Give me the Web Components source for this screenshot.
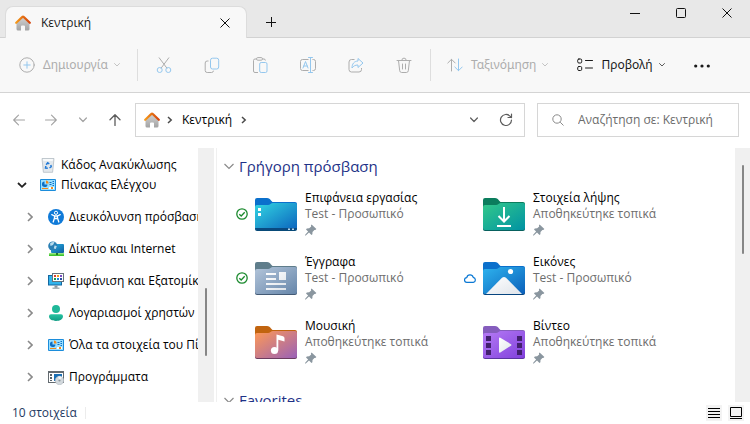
<!DOCTYPE html>
<html lang="el">
<head>
<meta charset="utf-8">
<title>Κεντρική</title>
<style>
  html, body {
    margin: 0;
    height: 100%;
    overflow: hidden;
    background: #fff;
    font-family: "Open Sans", "Noto Sans", sans-serif;
    font-size: 12px;
    line-height: 16px;
    color: #000;
  }
</style>
</head>
<body>
<explorer-window></explorer-window>

<script>
const HOUSE = `
  <defs>
    <linearGradient id="wall" x1="0" y1="0" x2="0" y2="1"><stop offset="0" stop-color="#d2d2d2"/><stop offset="1" stop-color="#a3a3a3"/></linearGradient>
    <linearGradient id="roof" x1="0" y1="0" x2="1" y2="0"><stop offset="0" stop-color="#f59a1b"/><stop offset="1" stop-color="#d4430c"/></linearGradient>
  </defs>
  <path fill="url(#wall)" d="M1.500 8 8 2l6.500 6v6a1.500 1.500 0 0 1-1.500 1.500H10V11.500a1 1 0 0 0-1-1H7a1 1 0 0 0-1 1v4H3A1.500 1.500 0 0 1 1.500 14z"/>
  <path fill="none" stroke="url(#roof)" stroke-width="2.200" stroke-linecap="round" stroke-linejoin="round" d="M1.200 7.800 7.400 1.900q.6-.6 1.200 0L14.800 7.800"/>`;

const PANEL = `
  <rect x="0" y="2" width="16" height="12" rx="1" fill="#1c8ddb"/>
  <rect x="1" y="3" width="14" height="10" fill="#9be0ff"/>
  <path fill="#0e6fc4" d="M4.500 4.500a2.800 2.800 0 1 0 3 3h-3z"/>
  <path fill="#f28a1c" d="M6 3.500A3 3 0 0 1 8.600 6.500H6z"/>
  <path fill="none" stroke="#0e6fc4" d="M9.500 5.500h2M9.500 7.500h2M12.500 4.500h1.500M12.500 6.500h1.500M12.500 8.500h1.500"/>
  <rect x="2" y="11" width="6" height="1" fill="#f28a1c"/>
  <rect x="9" y="10" width="5" height="2" fill="#fff"/>
  <rect x="11" y="10" width="2" height="2" fill="#f28a1c"/>`;

// every folder shares the same outline, only the colours and the symbol differ
function folder(tab, from, to, edge, symbol) {
  return `
  <defs>
    <linearGradient id="front" x1="0" y1="0" x2="1" y2="1"><stop offset="0" stop-color="${from}"/><stop offset="1" stop-color="${to}"/></linearGradient>
    <linearGradient id="white" x1="0" y1="0" x2="1" y2="1"><stop offset="0" stop-color="#fff"/><stop offset="1" stop-color="#dfe4ea"/></linearGradient>
  </defs>
  <path fill="${tab}" d="M0 2a2 2 0 0 1 2-2h10c2 0 3 1 4 2.500L17.500 4H40a2 2 0 0 1 2 2v8H0z"/>
  <path fill="${edge}" d="M0 10h42v21a2 2 0 0 1-2 2H2a2 2 0 0 1-2-2z"/>
  <path fill="url(#front)" d="M0 9a2 2 0 0 1 2-2h11c2 0 3-2 5-2h22a2 2 0 0 1 2 2v23a2 2 0 0 1-2 2H2a2 2 0 0 1-2-2z"/>
  ${symbol}`;
}

const ICONS = {
  house: [16, 16, HOUSE],
  panel: [16, 16, PANEL],
  close: [10, 10, `<path fill="none" stroke="currentColor" d="m.5.5 9 9m0-9-9 9"/>`],
  plus: [10, 10, `<path fill="none" stroke="currentColor" d="M5.500 0v10M0 5.500h10"/>`],
  minimize: [10, 10, `<path fill="none" stroke="currentColor" d="M0 5.500h10"/>`],
  maximize: [10, 10, `<rect x=".5" y=".5" width="9" height="9" rx="1" fill="none" stroke="currentColor"/>`],
  down: [8, 8, `<path fill="none" stroke="currentColor" stroke-linecap="round" stroke-linejoin="round" d="m1.500 2.500 2.500 2.500 2.500-2.500"/>`],
  midDown: [8, 8, `<path fill="none" stroke="currentColor" stroke-width="1.200" stroke-linecap="round" stroke-linejoin="round" d="m.6 2 3.400 3.500L7.400 2"/>`],
  wideDown: [10, 8, `<path fill="none" stroke="currentColor" stroke-width="1.200" d="m.5 2 4.500 4.500L9.500 2"/>`],
  boldDown: [10, 8, `<path fill="none" stroke="currentColor" stroke-width="1.800" d="m1 2 4 3.800L9 2"/>`],
  right: [6, 10, `<path fill="none" stroke="currentColor" stroke-width="1.600" d="m1 1 4 4-4 4"/>`],
  crumb: [6, 8, `<path fill="none" stroke="currentColor" stroke-width="1.500" d="m1 1 3.200 3L1 7"/>`],
  add: [16, 16, `<g fill="none" stroke-linecap="round"><circle cx="8" cy="8" r="7.200" stroke="currentColor"/><path stroke="var(--accent)" d="M8 4.800v6.400M4.800 8h6.400"/></g>`],
  cut: [16, 16, `<g fill="none"><path stroke="currentColor" stroke-linecap="round" d="M3.200.8 10.800 11M12.800.8 5.200 11"/><g stroke="var(--accent)"><circle cx="3.700" cy="13" r="2.500"/><circle cx="12.300" cy="13" r="2.500"/></g></g>`],
  copy: [16, 16, `<g fill="none"><path stroke="currentColor" d="M4.500 4H3.200a2 2 0 0 0-2 2v7.500a2 2 0 0 0 2 2h4.300a2 2 0 0 0 2-1.800"/><rect x="6.500" y="1.200" width="8.200" height="10.800" rx="2" stroke="var(--accent)"/></g>`],
  paste: [16, 16, `<g fill="none"><path stroke="currentColor" d="M4.500 2H3a1.500 1.500 0 0 0-1.500 1.500V14A1.500 1.500 0 0 0 3 15.500h3M10.500 2H12a1.500 1.500 0 0 1 1.400 1.500"/><rect x="4.500" y=".6" width="6" height="2.600" rx="1.300" stroke="currentColor"/><rect x="7.700" y="5.500" width="7.300" height="10" rx="1.500" stroke="var(--accent)"/></g>`],
  rename: [16, 16, `<g fill="none"><path stroke="currentColor" d="M8.500 2.500h-6a2 2 0 0 0-2 2v7a2 2 0 0 0 2 2h6M12.500 2.500h1a2 2 0 0 1 2 2v7a2 2 0 0 1-2 2h-1"/><path stroke="var(--accent)" stroke-linecap="round" d="M8.500.5h4M10.500.5v15M8.500 15.500h4M3 11l2.500-6.500L8 11M3.800 9h3.400"/></g>`],
  share: [16, 16, `<g fill="none" stroke-linejoin="round"><path stroke="currentColor" d="M6.500 2.500h-3a2.500 2.500 0 0 0-2.500 2.500v7.500A2.500 2.500 0 0 0 3.500 15h7.500a2.500 2.500 0 0 0 2.500-2.500V11"/><path stroke="var(--accent)" d="M10 1.500 15 6l-5 4.500V8C7 8 5.500 9 4 11c0-4 2-6.800 6-7z"/></g>`],
  trash: [16, 16, `<path fill="none" stroke="currentColor" stroke-linecap="round" d="M1 3.500h14M5.800 3.300a2.200 2.200 0 0 1 4.400 0M2.500 3.500l1.200 10.200a2 2 0 0 0 2 1.800h4.600a2 2 0 0 0 2-1.800l1.200-10.200M6.500 7v5M9.500 7v5"/>`],
  sort: [16, 16, `<g fill="none" stroke-linecap="round" stroke-linejoin="round"><path stroke="currentColor" d="M4.500 14V2.500M.8 6l3.700-3.700L8.200 6"/><path stroke="var(--accent)" d="M11.500 2v11.500M7.800 10l3.700 3.700 3.700-3.700"/></g>`],
  layout: [16, 16, `<g fill="none" stroke="currentColor" stroke-linecap="round"><rect x=".7" y="2" width="4" height="4" rx="1.200"/><rect x=".7" y="9.500" width="4" height="4" rx="1.200"/><path d="M8.500 3.500h7M8.500 11h7"/></g>`],
  dots: [16, 16, `<g fill="currentColor"><circle cx="1.700" cy="9" r="1.600"/><circle cx="8" cy="9" r="1.600"/><circle cx="14.300" cy="9" r="1.600"/></g>`],
  back: [12, 12, `<path fill="none" stroke="currentColor" stroke-width="1.100" stroke-linecap="round" stroke-linejoin="round" d="M11.500 6H.7M5.500 1.200.7 6l4.800 4.800"/>`],
  forward: [12, 12, `<path fill="none" stroke="currentColor" stroke-width="1.100" stroke-linecap="round" stroke-linejoin="round" d="M.5 6h10.800M6.500 1.200 11.300 6l-4.800 4.800"/>`],
  up: [12, 12, `<path fill="none" stroke="currentColor" stroke-width="1.300" stroke-linecap="round" stroke-linejoin="round" d="M6 11.500V.8M1 5.800l5-5 5 5"/>`],
  refresh: [14, 14, `<path fill="none" stroke="currentColor" stroke-width="1.200" stroke-linecap="round" stroke-linejoin="round" d="M12.500 7A5.500 5.500 0 1 1 11 3.200L12.300 4.500M12.500 1v3.500H9"/>`],
  search: [12, 12, `<g fill="none" stroke="currentColor"><circle cx="5" cy="5" r="4.200"/><path d="m8.200 8.200 3.300 3.300"/></g>`],
  bin: [16, 16, `<path fill="#e3e8ec" stroke="#b4bcc4" stroke-width=".8" d="M2 1.500h12l-1.400 13.800H3.400z"/><path fill="#f7f9fa" d="M3 2h10l-.3 2H3.300z"/><path fill="none" stroke="#2279d6" stroke-width="1.500" d="m6.200 7.800 1.500-2 1.600 1M10.800 8l.4 1.800-1.700 1.200M7.800 11.300 5.500 11l.3-2"/>`],
  access: [16, 16, `<circle cx="8" cy="8" r="8" fill="#0f7ad8"/><circle cx="8" cy="3.800" r="1.600" fill="none" stroke="#fff"/><path fill="none" stroke="#fff" stroke-width="1.300" stroke-linecap="round" stroke-linejoin="round" d="M3.800 5.600 6.500 7v2L5.200 13M12.200 5.600 9.500 7v2l1.300 4M6.500 7h3M7 9.500h2"/>`],
  network: [16, 16, `<defs><linearGradient id="screen" x1="0" y1="0" x2="1" y2="1"><stop offset="0" stop-color="#28b4e8"/><stop offset="1" stop-color="#0d5c9e"/></linearGradient></defs><rect x="3" y="3" width="13" height="9" rx="1" fill="url(#screen)"/><circle cx="4.800" cy="5" r="4.600" fill="#2a7fb4"/><path fill="#b8dcee" d="M2 2.500Q4 .8 6.500 1.200L5 4 2.500 5zM6.500 4.500l2.300.5-1 3-2-.5z"/><path fill="#3fc32f" d="M1 12.500h15V15H1z"/><path fill="#8be86e" d="M1 12.500h15v1H1z"/><path fill="#227a28" d="M8 12h2v2H8z"/>`],
  look: [16, 16, `<path fill="#15679f" d="M0 2h14v10.500H0z"/><path fill="#31b3ec" d="M1 3h12v8.500H1z"/><path fill="#8c979e" d="M6.500 12.500h3V15h-3z"/><path fill="#a9b3b9" d="M4.500 14.500h7v1.500h-7z"/><rect x="4.500" y=".5" width="11" height="8" fill="#fff" stroke="#66737c"/><path fill="#d83b2e" d="M6 2h2v2H6z"/><path fill="#f39a1e" d="M9 2h2v2H9z"/><path fill="#7a4dc4" d="M12 2h2v2h-2z"/><path fill="#1d9a4a" d="M6 5h2v2H6z"/><path fill="#1883d8" d="M9 5h2v2H9z"/><path fill="#2a4ea0" d="M12 5h2v2h-2z"/>`],
  user: [16, 16, `<defs><linearGradient id="body" x1="0" y1="0" x2="0" y2="1"><stop offset="0" stop-color="#27c3a2"/><stop offset="1" stop-color="#0e9b83"/></linearGradient></defs><circle cx="8" cy="4" r="4" fill="#20b899"/><path fill="url(#body)" d="M3 9.300h10a2 2 0 0 1 2 2c0 3-3 4.700-7 4.700s-7-1.700-7-4.700a2 2 0 0 1 2-2z"/>`],
  programs: [16, 16, `<path fill="#646b70" d="M0 2h16v12H0z"/><path fill="#fff" d="M1 4h14v9H1z"/><path fill="#1b6fb4" d="M6 5h8v7H6z"/><path fill="#59636a" d="M2 5h2v2H2zM2 8h2v2H2zM2 11h2v1H2z"/><circle cx="11.500" cy="11.500" r="4.200" fill="#d3d9dd" stroke="#b4bcc2" stroke-width=".6"/><path fill="#f3f6f7" d="m11.500 11.500-1.500-4a4.200 4.200 0 0 1 4 .6z"/><circle cx="11.500" cy="11.500" r="1.100" fill="#8d979d"/>`],
  pin: [12, 12, `<path fill="#8a969f" d="M6.600.6 11.400 5 10.300 6 9.400 5.900 7.500 8 7.400 10.300 6.500 11 4 8.500.8 11.600 0 11.400.2 10.700 3.100 7.500 1 5.400 1.800 4.500 4.200 4.300 6.200 2.500 5.900 1.500z"/>`],
  synced: [12, 12, `<g fill="none" stroke="#1b8a2e" stroke-width="1.300"><circle cx="6" cy="6" r="5.200"/><path d="M3.300 6.200 5.200 8 8.700 4.300"/></g>`],
  cloud: [12, 12, `<path fill="none" stroke="#0b78d4" stroke-width="1.200" stroke-linejoin="round" d="M3 10.400a2.400 2.400 0 0 1-.2-4.800 3.300 3.300 0 0 1 6.400-.3 2.600 2.600 0 0 1 .1 5.100z"/>`],
  list: [12, 10, `<path stroke="#000" d="M0 .5h12M0 3.500h12M0 6.500h12M0 9.500h12"/>`],
  tiles: [12, 12, `<path fill="none" stroke="#000" d="M.5.5h11v9H.5zM0 11.500h12"/>`],
  desktop: [42, 33, folder("#0b70cc", "#33d6e2", "#0b63bd", "#084a78", `<path fill="#0a4a80" d="M0 30h42a2 2 0 0 1-2 2H2a2 2 0 0 1-2-2z"/><path fill="#fff" d="M3 10h3v3H3zM3 15h3v3H3z"/><path fill="#b9d8ee" d="M33 30.500h2v1.500h-2zM37 30.500h2v1.500h-2z"/>`)],
  downloads: [42, 33, folder("#0b7d5d", "#33c98a", "#0092a3", "#08615e", `<path fill="none" stroke="#fff" stroke-width="2" d="M21 9v14M15.500 18l5.500 5.500 5.500-5.500M14 28h14"/>`)],
  documents: [42, 33, folder("#5f7d8b", "#b3c5da", "#6686aa", "#435a75", `<path fill="url(#white)" d="M11 11h10v2H11zM11 16h10v2H11zM24 10h7v8h-7zM11 21h20v2H11zM11 26h20v2H11z"/>`)],
  pictures: [42, 33, folder("#0b70cc", "#2fb4ee", "#0a5fba", "#07457f", `<path fill="url(#white)" d="M3 32 19 15.800q2-1.800 4 0L39 32z"/><circle cx="27.500" cy="9.500" r="2.600" fill="#fff"/>`)],
  music: [42, 33, folder("#c1640f", "#ff9a54", "#9a61b8", "#6c3c5f", `<ellipse cx="19.500" cy="24.500" rx="3.600" ry="3.500" fill="#fff"/><path fill="#fff" d="M21.500 8.500 28 10.200q1.500.5 1.500 2V15.500l-6.200-1.800V24.500h-1.800z"/>`)],
  videos: [42, 33, folder("#855dbd", "#b57bf5", "#8140dc", "#5b34a0", `<path fill="#42206e" d="M3 10h5v5H3zM3 17h5v5H3zM3 24h5v5H3zM34 10h5v5h-5zM34 17h5v5h-5zM34 24h5v5h-5z"/><path fill="url(#white)" d="M16 12.500q0-1.500 1.300-.8L28 18.200q1 .8 0 1.500L17.300 26.500q-1.300.6-1.300-.8z"/>`)]
};

class AppIcon extends HTMLElement {
  constructor() {
    super();
    this.attachShadow({ mode: "open" });
  }
  connectedCallback() {
    const [w, h, shapes] = ICONS[this.getAttribute("name")];
    this.shadowRoot.innerHTML = `
      <style>
        :host { display: inline-flex; flex: none; }
        svg { display: block; }
      </style>
      <svg width="${w}" height="${h}" viewBox="0 0 ${w} ${h}" aria-hidden="true">${shapes}</svg>`;
  }
}
customElements.define("app-icon", AppIcon);

class TitleBar extends HTMLElement {
  constructor() {
    super();
    this.attachShadow({ mode: "open" });
  }
  connectedCallback() {
    this.shadowRoot.innerHTML = `
      <style>
        :host {
          display: flex;
          align-items: flex-end;
          height: 38px;
          padding-left: 5px;
          box-sizing: border-box;
          background: linear-gradient(#d2d2d2, #d2d2d2) bottom / 100% 1px no-repeat #e8e8e8;
        }
        .tab {
          display: flex;
          align-items: center;
          gap: 10px;
          flex: 0 1 242px;
          height: 32px;
          padding: 0 16px 0 9px;
          box-sizing: border-box;
          border: 1px solid #dcdcdc;
          border-bottom: 0;
          border-radius: 8px 8px 0 0;
          background: #f8f8f8;
          color: #1a1a1a;
          font-weight: 500;
        }
        .tab span { flex: 1; }
        button {
          display: flex;
          align-items: center;
          justify-content: center;
          padding: 0;
          border: 0;
          background: none;
          color: #111;
        }
        .new { width: 48px; height: 32px; }
        .caption { display: flex; align-self: flex-start; margin-left: auto; }
        .caption button { width: 46px; height: 26px; }
      </style>
      <div class="tab">
        <app-icon name="house"></app-icon>
        <span><slot></slot></span>
        <button aria-label="Κλείσιμο καρτέλας"><app-icon name="close"></app-icon></button>
      </div>
      <button class="new" aria-label="Νέα καρτέλα"><app-icon name="plus"></app-icon></button>
      <div class="caption">
        <button aria-label="Ελαχιστοποίηση"><app-icon name="minimize"></app-icon></button>
        <button aria-label="Μεγιστοποίηση"><app-icon name="maximize"></app-icon></button>
        <button aria-label="Κλείσιμο"><app-icon name="close"></app-icon></button>
      </div>`;
  }
}
customElements.define("title-bar", TitleBar);

class CommandButton extends HTMLElement {
  constructor() {
    super();
    this.attachShadow({ mode: "open" });
  }
  connectedCallback() {
    const off = this.hasAttribute("off") ? "disabled" : "";
    const label = this.getAttribute("label");
    const aria = label ? `aria-label="${label}"` : "";
    const arrow = this.hasAttribute("menu") ? `<app-icon name="down"></app-icon>` : "";
    this.shadowRoot.innerHTML = `
      <style>
        :host { display: block; }
        button {
          display: flex;
          align-items: center;
          gap: 8px;
          height: 32px;
          padding: 0 8px;
          border: 0;
          background: none;
          font: inherit;
          color: #1a1a1a;
          white-space: nowrap;
          --accent: #1a1a1a;
        }
        button:disabled { color: #adadad; --accent: #94c7ee; }
        app-icon[name="down"] { margin-left: -3px; opacity: .7; }
      </style>
      <button ${off} ${aria}><app-icon name="${this.getAttribute("icon")}"></app-icon><slot></slot>${arrow}</button>`;
  }
}
customElements.define("command-button", CommandButton);

class CommandBar extends HTMLElement {
  constructor() {
    super();
    this.attachShadow({ mode: "open" });
  }
  connectedCallback() {
    this.shadowRoot.innerHTML = `
      <style>
        :host {
          display: flex;
          align-items: center;
          height: 55px;
          box-sizing: border-box;
          padding: 0 11px;
          border-bottom: 1px solid #d4d4d4;
          background: #f8f8f8;
          font-family: "Noto Sans", "Open Sans", sans-serif;
        }
        .line { width: 1px; height: 32px; margin: 0 8px; background: #dedede; }
        .edit { display: flex; gap: 16px; padding: 0 2px; }
        .view { display: flex; gap: 12px; }
      </style>
      <command-button icon="add" menu off>Δημιουργία</command-button>
      <div class="line"></div>
      <div class="edit">
        <command-button icon="cut" label="Αποκοπή" off></command-button>
        <command-button icon="copy" label="Αντιγραφή" off></command-button>
        <command-button icon="paste" label="Επικόλληση" off></command-button>
        <command-button icon="rename" label="Μετονομασία" off></command-button>
        <command-button icon="share" label="Κοινή χρήση" off></command-button>
        <command-button icon="trash" label="Διαγραφή" off></command-button>
      </div>
      <div class="line"></div>
      <div class="view">
        <command-button icon="sort" menu off>Ταξινόμηση</command-button>
        <command-button icon="layout" menu>Προβολή</command-button>
        <command-button icon="dots" label="Περισσότερα"></command-button>
      </div>`;
  }
}
customElements.define("command-bar", CommandBar);

class AddressBar extends HTMLElement {
  constructor() {
    super();
    this.attachShadow({ mode: "open" });
  }
  connectedCallback() {
    this.shadowRoot.innerHTML = `
      <style>
        :host {
          display: flex;
          align-items: center;
          height: 55px;
          box-sizing: border-box;
          padding: 0 11px 1px 3px;
        }
        button {
          display: flex;
          align-items: center;
          justify-content: center;
          width: 32px;
          height: 32px;
          padding: 0;
          border: 0;
          background: none;
          color: #5c5c5c;
        }
        .history { display: flex; margin-right: 4px; }
        button:disabled { color: #a3a3a3; }
        .box {
          display: flex;
          align-items: center;
          height: 34px;
          box-sizing: border-box;
          border: 1px solid #d6d6d6;
          background: #fff;
        }
        .path { flex: 1; gap: 7px; padding: 0 2px 0 8px; color: #4a4a4a; min-width: 0; }
        .path a { padding: 0 2px; color: #000; text-decoration: none; }
        .tools { display: flex; margin-left: auto; }
        .search { flex: 0 1 202px; gap: 14px; margin-left: 12px; padding: 0 14px; color: #8a8a8a; min-width: 0; }
        input {
          flex: 1;
          min-width: 0;
          padding: 0;
          border: 0;
          outline: 0;
          background: none;
          font: inherit;
          color: #000;
        }
        input::placeholder { color: #6b6b6b; opacity: 1; }
      </style>
      <div class="history">
        <button disabled aria-label="Πίσω"><app-icon name="back"></app-icon></button>
        <button disabled aria-label="Εμπρός"><app-icon name="forward"></app-icon></button>
        <button disabled aria-label="Πρόσφατες θέσεις"><app-icon name="midDown"></app-icon></button>
        <button aria-label="Επάνω"><app-icon name="up"></app-icon></button>
      </div>
      <div class="box path">
        <app-icon name="house"></app-icon>
        <app-icon name="crumb"></app-icon>
        <a href="#home">Κεντρική</a>
        <app-icon name="crumb"></app-icon>
        <div class="tools">
          <button aria-label="Προηγούμενες θέσεις"><app-icon name="midDown"></app-icon></button>
          <button aria-label="Ανανέωση"><app-icon name="refresh"></app-icon></button>
        </div>
      </div>
      <label class="box search">
        <app-icon name="search"></app-icon>
        <input type="text" aria-label="Αναζήτηση" placeholder="Αναζήτηση σε: Κεντρική">
      </label>`;
  }
}
customElements.define("address-bar", AddressBar);

class TreeRow extends HTMLElement {
  constructor() {
    super();
    this.attachShadow({ mode: "open" });
  }
  connectedCallback() {
    const child = this.hasAttribute("child");
    const arrow = this.getAttribute("arrow");
    this.shadowRoot.innerHTML = `
      <style>
        :host {
          display: flex;
          align-items: center;
          height: ${child ? 32 : 20}px;
          padding-left: ${child ? 22 : 14}px;
          white-space: nowrap;
        }
        .arrow {
          display: flex;
          flex: none;
          justify-content: center;
          width: 16px;
          margin-right: 10px;
          color: ${child ? "#8a8a8a" : "#222"};
        }
        a { display: flex; align-items: center; gap: 5px; color: #000; text-decoration: none; }
      </style>
      <span class="arrow">${arrow ? `<app-icon name="${arrow}"></app-icon>` : ""}</span>
      <a href="#"><app-icon name="${this.getAttribute("icon")}"></app-icon><slot></slot></a>`;
  }
}
customElements.define("tree-row", TreeRow);

class ScrollTrack extends HTMLElement {
  constructor() {
    super();
    this.attachShadow({ mode: "open" });
    this.shadowRoot.innerHTML = `
      <style>
        :host { display: flex; flex-direction: column; align-items: center; flex: none; background: #f0f0f0; }
        .before { flex: var(--before); }
        .thumb { flex: var(--thumb); width: 2px; border-radius: 1px; background: #868686; }
        .after { flex: var(--after); }
      </style>
      <div class="before"></div><div class="thumb"></div><div class="after"></div>`;
  }
}
customElements.define("scroll-track", ScrollTrack);

class NavTree extends HTMLElement {
  constructor() {
    super();
    this.attachShadow({ mode: "open" });
  }
  connectedCallback() {
    this.shadowRoot.innerHTML = `
      <style>
        :host { display: flex; flex: none; width: 217px; box-sizing: border-box; border-right: 1px solid #f0f0f0; padding-right: 2px; }
        nav { flex: 1; min-width: 0; overflow: hidden; padding-top: 7px; }
        .group { padding-top: 6px; }
        scroll-track { width: 16px; --before: 140; --thumb: 68; --after: 46; }
      </style>
      <nav aria-label="Φάκελοι">
        <tree-row icon="bin">Κάδος Ανακύκλωσης</tree-row>
        <tree-row icon="panel" arrow="boldDown">Πίνακας Ελέγχου</tree-row>
        <div class="group">
          <tree-row child icon="access" arrow="right">Διευκόλυνση πρόσβασης</tree-row>
          <tree-row child icon="network" arrow="right">Δίκτυο και Internet</tree-row>
          <tree-row child icon="look" arrow="right">Εμφάνιση και Εξατομίκευση</tree-row>
          <tree-row child icon="user" arrow="right">Λογαριασμοί χρηστών</tree-row>
          <tree-row child icon="panel" arrow="right">Όλα τα στοιχεία του Πίνακα Ελέγχου</tree-row>
          <tree-row child icon="programs" arrow="right">Προγράμματα</tree-row>
        </div>
      </nav>
      <scroll-track></scroll-track>`;
  }
}
customElements.define("nav-tree", NavTree);

class FolderTile extends HTMLElement {
  constructor() {
    super();
    this.attachShadow({ mode: "open" });
  }
  connectedCallback() {
    const status = this.getAttribute("status");
    this.shadowRoot.innerHTML = `
      <style>
        :host { display: flex; align-items: center; height: 48px; white-space: nowrap; }
        .status { display: flex; width: 19px; }
        .text { display: flex; flex-direction: column; margin-left: 8px; }
        .place { color: #6d6d6d; }
        .pin { display: flex; align-items: center; height: 16px; }
      </style>
      <span class="status">${status ? `<app-icon name="${status}"></app-icon>` : ""}</span>
      <app-icon name="${this.getAttribute("icon")}"></app-icon>
      <div class="text">
        <span><slot></slot></span>
        <span class="place">${this.getAttribute("place")}</span>
        <span class="pin"><app-icon name="pin"></app-icon></span>
      </div>`;
  }
}
customElements.define("folder-tile", FolderTile);

class FileGroup extends HTMLElement {
  constructor() {
    super();
    this.attachShadow({ mode: "open" });
  }
  connectedCallback() {
    this.shadowRoot.innerHTML = `
      <style>
        :host { display: block; }
        h2 {
          display: flex;
          align-items: center;
          gap: 5px;
          height: 20px;
          margin: 0;
          font-size: 15px;
          font-weight: 400;
          line-height: 20px;
          color: #1e3287;
        }
        h2 app-icon { color: #8a8a8a; }
        .grid {
          display: grid;
          grid-template-columns: repeat(auto-fill, 228px);
          gap: 16px 0;
          padding: 14px 0 24px 12px;
        }
      </style>
      <h2><app-icon name="wideDown"></app-icon>${this.getAttribute("heading")}</h2>
      <div class="grid"><slot></slot></div>`;
  }
}
customElements.define("file-group", FileGroup);

class FileView extends HTMLElement {
  constructor() {
    super();
    this.attachShadow({ mode: "open" });
  }
  connectedCallback() {
    this.shadowRoot.innerHTML = `
      <style>
        :host { display: flex; flex: 1; min-width: 0; }
        main { flex: 1; min-width: 0; overflow: hidden; padding: 8px 0 0 7px; }
        scroll-track { width: 15px; --before: 17; --thumb: 89; --after: 148; }
      </style>
      <main>
        <file-group heading="Γρήγορη πρόσβαση">
          <folder-tile icon="desktop" status="synced" place="Test - Προσωπικό">Επιφάνεια εργασίας</folder-tile>
          <folder-tile icon="downloads" place="Αποθηκεύτηκε τοπικά">Στοιχεία λήψης</folder-tile>
          <folder-tile icon="documents" status="synced" place="Test - Προσωπικό">Έγγραφα</folder-tile>
          <folder-tile icon="pictures" status="cloud" place="Test - Προσωπικό">Εικόνες</folder-tile>
          <folder-tile icon="music" place="Αποθηκεύτηκε τοπικά">Μουσική</folder-tile>
          <folder-tile icon="videos" place="Αποθηκεύτηκε τοπικά">Βίντεο</folder-tile>
        </file-group>
        <file-group heading="Favorites"></file-group>
      </main>
      <scroll-track></scroll-track>`;
  }
}
customElements.define("file-view", FileView);

class StatusBar extends HTMLElement {
  constructor() {
    super();
    this.attachShadow({ mode: "open" });
    this.shadowRoot.innerHTML = `
      <style>
        :host { display: flex; align-items: center; height: 22px; padding: 0 6px 0 12px; color: #1e3a5f; }
        .count { padding-right: 8px; border-right: 1px solid #ececec; line-height: 12px; }
        .modes { display: flex; gap: 6px; margin-left: auto; }
        button {
          display: flex;
          align-items: center;
          justify-content: center;
          width: 16px;
          height: 16px;
          padding: 0;
          border: 0;
          background: #f3f3f3;
        }
      </style>
      <span class="count"><slot></slot></span>
      <div class="modes">
        <button aria-label="Λεπτομέρειες"><app-icon name="list"></app-icon></button>
        <button aria-label="Μεγάλα εικονίδια"><app-icon name="tiles"></app-icon></button>
      </div>`;
  }
}
customElements.define("status-bar", StatusBar);

class ExplorerWindow extends HTMLElement {
  constructor() {
    super();
    this.attachShadow({ mode: "open" });
  }
  connectedCallback() {
    this.shadowRoot.innerHTML = `
      <style>
        :host { display: flex; flex-direction: column; height: 100vh; }
        .panes { display: flex; flex: 1; min-height: 0; }
      </style>
      <title-bar>Κεντρική</title-bar>
      <command-bar></command-bar>
      <address-bar></address-bar>
      <div class="panes">
        <nav-tree></nav-tree>
        <file-view></file-view>
      </div>
      <status-bar>10 στοιχεία</status-bar>`;
  }
}
customElements.define("explorer-window", ExplorerWindow);
</script>
</body>
</html>
